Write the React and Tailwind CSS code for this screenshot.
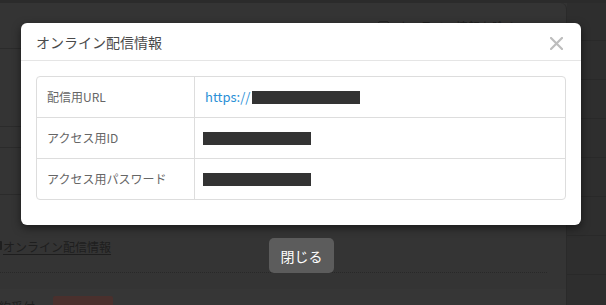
import React from "react";

export default function App() {
  const font = { fontFamily: '"Noto Sans CJK JP", "Noto Sans", sans-serif' };
  return (
    <div
      className="relative w-[606px] h-[305px] overflow-hidden bg-[#333333]"
      style={font}
    >
      {/* dimmed page underneath */}
      <div className="h-[3px] bg-[#2b2b2b]" />
      <div className="flex h-[302px]">
        <div className="w-[567px] shrink-0 border-r border-[#2a2a2a] bg-[#343434] rounded-tr-md flex flex-col">
          <div className="h-[46px] shrink-0 border-b border-[#2b2b2b] relative flex justify-end pr-[20px]">
            <div className="flex items-start gap-[7px] pt-[16px] mr-[30px]">
              <div className="w-[11px] h-[11px] border border-[#242424] rounded-[2px] mt-[2px]" />
              <span className="text-[12px] leading-[16px] text-[#202020]">オンライン情報を除く</span>
            </div>
          </div>
          <div className="h-[78px] shrink-0 border-b border-[#2b2b2b]" />
          <div className="h-[21px] shrink-0 border-b border-[#2b2b2b]" />
          <div className="h-[47px] shrink-0 border-b border-[#2b2b2b]" />
          <div className="h-[77px] shrink-0 flex items-end pb-[17px]">
            <div className="flex items-center -ml-[8px]">
              <div className="w-[10px] h-[9px] bg-[#1f1f1f] rounded-[1px] mr-[1px] mb-[3px]" />
              <span className="text-[12px] leading-[16px] text-[#1e1e1e] underline underline-offset-2">
                オンライン配信情報
              </span>
            </div>
          </div>
          <div className="w-[547px] shrink-0 border-b border-dotted border-[#282828]" />
          <div className="h-[16px] shrink-0" />
          <div className="flex-1 bg-[#363636] flex items-start pt-[7px]">
            <span className="text-[12px] leading-[16px] text-[#1e1e1e] -ml-[1px] mt-[3px]">約受付</span>
            <div className="ml-[18px] w-[60px] h-[20px] bg-[#4a302d] rounded-[2px]" />
          </div>
        </div>
        <div className="flex-1 bg-[#2e2e2e] flex flex-col">
          <div className="h-[38px] shrink-0 border-b border-[#292929]" />
          <div className="h-[39px] shrink-0 border-b border-[#292929]" />
          <div className="h-[39px] shrink-0 border-b border-[#292929]" />
          <div className="h-[39px] shrink-0 border-b border-[#292929]" />
          <div className="h-[39px] shrink-0 border-b border-[#292929]" />
          <div className="h-[39px] shrink-0 border-b border-[#292929]" />
          <div className="h-[39px] shrink-0 border-b border-[#292929]" />
        </div>
      </div>

      {/* modal */}
      <div className="absolute left-[21px] top-[23px] w-[560px] flex flex-col items-center gap-[13px]">
        <div className="w-full h-[202px] bg-white rounded-[6px] shadow-[0_3px_9px_rgba(0,0,0,0.5)] flex flex-col">
          <div className="h-[38px] border-b border-[#e5e5e5] flex items-center justify-between pl-[15px] pr-[18px]">
            <span className="text-[14px] leading-[20px] text-[#4a4a4a] pt-[1px]">オンライン配信情報</span>
            <svg width="13" height="13" viewBox="0 0 13 13" className="mt-[4px]">
              <path d="M1 1 L12 12 M12 1 L1 12" stroke="#bdbdbd" strokeWidth="2.2" strokeLinecap="square" />
            </svg>
          </div>
          <div className="px-[15px] pt-[15px]">
            <div className="border border-[#dddddd] rounded-[4px] text-[12px]">
              <div className="flex h-[41px] border-b border-[#dddddd]">
                <div className="w-[158px] shrink-0 border-r border-[#dddddd] flex items-center pl-[10px] text-[#666666]">
                  配信用URL
                </div>
                <div className="flex items-center pl-[10px]">
                  <span className="text-[13px] text-[#2a8fd6]">https://</span>
                  <div className="w-[108px] h-[13px] bg-[#333333] ml-[2px]" />
                </div>
              </div>
              <div className="flex h-[41px] border-b border-[#dddddd]">
                <div className="w-[158px] shrink-0 border-r border-[#dddddd] flex items-center pl-[10px] text-[#666666]">
                  アクセス用ID
                </div>
                <div className="flex items-center pl-[8px]">
                  <div className="w-[108px] h-[13px] bg-[#333333]" />
                </div>
              </div>
              <div className="flex h-[40px]">
                <div className="w-[158px] shrink-0 border-r border-[#dddddd] flex items-center pl-[10px] text-[#666666]">
                  アクセス用パスワード
                </div>
                <div className="flex items-center pl-[8px]">
                  <div className="w-[108px] h-[13px] bg-[#333333]" />
                </div>
              </div>
            </div>
          </div>
        </div>
        <button className="w-[65px] h-[35px] bg-[#5c5c5c] rounded-[5px] text-white text-[14px] leading-[20px] ml-[1px]">
          閉じる
        </button>
      </div>
    </div>
  );
}
